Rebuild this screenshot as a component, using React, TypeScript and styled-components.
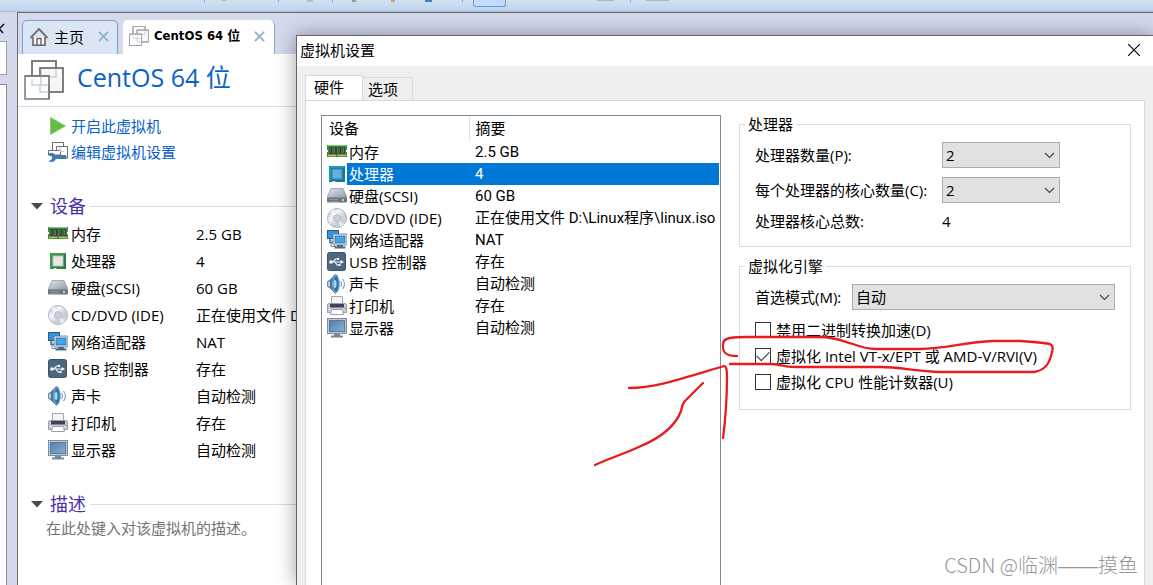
import React from "react";
import styled, { createGlobalStyle } from "styled-components";

const GlobalStyle = createGlobalStyle`
  * { box-sizing: border-box; }
  html, body, #root { height: 100%; }
  body {
    margin: 0;
    overflow: hidden;
    font-family: "Open Sans", "Noto Sans CJK SC", sans-serif;
    font-size: 15px;
    line-height: 20px;
    color: #000;
  }
  button, select, input { font: inherit; color: inherit; margin: 0; }
  button { padding: 0; border: 0; background: none; text-align: left; }
  h1, h2, p { margin: 0; font-weight: 400; }
  svg { display: block; flex: none; }
`;

/* ---------- Main window ---------- */

const Window = styled.div`
  position: relative;
  display: flex;
  flex-direction: column;
  height: 100vh;
  background: #d4d9ec;
  overflow: hidden;
`;

const Toolbar = styled.div`
  display: flex;
  flex: none;
  height: 12px;
  padding-left: 204px;
  background: linear-gradient(#d3e2f3, #bed3eb);
  border-bottom: 1px solid #a8bdd4;
`;

const ToolMark = styled.span<{ $gap: number; $w: number; $h: number; $color: string }>`
  flex: none;
  margin-left: ${(p) => p.$gap}px;
  width: ${(p) => p.$w}px;
  height: ${(p) => p.$h}px;
  background: ${(p) => p.$color};
`;

const PressedTool = styled.button`
  flex: none;
  width: 33px;
  height: 7px;
  margin-left: 10px;
  background: #c3dcfb;
  border: 1px solid #6b9bd0;
  border-top: 0;
  border-radius: 0 0 3px 3px;
`;

const Workspace = styled.div`
  display: flex;
  flex: 1;
  min-height: 0;
`;

const Library = styled.aside`
  display: flex;
  flex-direction: column;
  flex: none;
  width: 17px;
  padding-right: 10px;
`;

const LibraryClose = styled.button`
  height: 29px;
  padding-top: 2px;
  overflow: hidden;
`;

const SearchBox = styled.div`
  height: 34px;
  background: #fff;
  border: 1px solid #a0a0a0;
  border-left: 0;
`;

const LibraryTree = styled.div`
  flex: 1;
  margin-top: 9px;
  background: #fff;
  border: solid #828790;
  border-width: 1px 1px 0 0;
`;

const Document = styled.main`
  display: flex;
  flex-direction: column;
  flex: 1;
  min-width: 0;
  border: solid #6c6c6c;
  border-width: 1px 0 0 1px;
`;

const TabStrip = styled.div`
  display: flex;
  gap: 5px;
  height: 41px;
  padding: 7px 0 0 4px;
`;

const DocTab = styled.div<{ $active?: boolean }>`
  display: flex;
  align-items: center;
  gap: 6px;
  height: 34px;
  padding: 0 ${(p) => (p.$active ? 9 : 8)}px 2px 6px;
  background: ${(p) => (p.$active ? "#fff" : "#dbe6f5")};
  border: solid ${(p) => (p.$active ? "#8fa9c6" : "#7d9fc5")};
  border-width: ${(p) => (p.$active ? "0 1px 0 0" : "1px 1px 0 1px")};
  border-radius: 5px 5px 0 0;
`;

const TabName = styled.button<{ $bold?: boolean }>`
  display: flex;
  align-items: center;
  gap: 5px;
  font-family: ${(p) => (p.$bold ? '"DejaVu Sans Condensed", ' : "")}"Open Sans", "Noto Sans CJK SC", sans-serif;
  font-size: ${(p) => (p.$bold ? 13 : 15)}px;
  font-weight: ${(p) => (p.$bold ? 700 : 400)};
  white-space: nowrap;
`;

const TabClose = styled.button`
  margin-left: 8px;
`;

const Page = styled.div`
  flex: 1;
  min-height: 0;
  background: #fff;
`;

const PageHeader = styled.header`
  display: flex;
  align-items: flex-start;
  gap: 13px;
  height: 53px;
  padding: 6px 0 0 6px;
  border-bottom: 1px solid #cfe0f4;
`;

const PageTitle = styled.h1`
  font-size: 25px;
  line-height: 34px;
  color: #0a62c9;
`;

const Actions = styled.nav`
  display: flex;
  flex-direction: column;
  padding: 6px 0 0 30px;
`;

const ActionLink = styled.a`
  display: flex;
  align-items: center;
  gap: 3px;
  height: 26px;
  color: #0a62c9;
  text-decoration: none;
`;

const Section = styled.section`
  padding: 27px 0 0 13px;
`;

const SectionHead = styled.div`
  display: flex;
  align-items: center;
  gap: 7px;
  height: 28px;
  &::after { content: ""; flex: 1; height: 1px; background: #dcdcdc; margin-left: -3px; }
`;

const SectionTitle = styled.h2`
  font-size: 18px;
  line-height: 28px;
  color: #4a2fa5;
`;

const Summary = styled.table`
  margin-left: 17px;
  border-collapse: collapse;
  td { height: 27px; padding: 0; white-space: nowrap; }
  td:first-child { width: 148px; }
`;

const Placeholder = styled.p`
  padding-left: 15px;
  color: #747474;
`;

const IconLabel = styled.span`
  display: flex;
  align-items: center;
  gap: 3px;
`;

/* ---------- Settings dialog ---------- */

const Dialog = styled.section`
  position: absolute;
  top: 35px;
  right: 0;
  bottom: 0;
  left: 296px;
  display: flex;
  flex-direction: column;
  background: #efefef;
  border: solid #62646a;
  border-width: 1px 0 0 1px;
  box-shadow: 0 0 18px rgba(0, 0, 0, 0.38);
`;

const TitleBar = styled.header`
  display: flex;
  align-items: center;
  justify-content: space-between;
  height: 30px;
  padding: 0 12px 2px 3px;
  background: #fff;
`;

const DialogTabs = styled.div`
  display: flex;
  align-items: flex-end;
  height: 34px;
  padding-left: 8px;
`;

const DialogTab = styled.button<{ $active?: boolean }>`
  height: ${(p) => (p.$active ? 26 : 23)}px;
  width: ${(p) => (p.$active ? 58 : 50)}px;
  padding: 0 0 ${(p) => (p.$active ? 4 : 0)}px ${(p) => (p.$active ? 8 : 5)}px;
  margin-bottom: ${(p) => (p.$active ? -1 : 0)}px;
  background: ${(p) => (p.$active ? "#fff" : "#efefef")};
  border: 1px solid #d9d9d9;
  border-bottom: 0;
  border-left-width: ${(p) => (p.$active ? 1 : 0)}px;
`;

const DialogPanel = styled.div`
  display: grid;
  grid-template-columns: 400px 1fr;
  gap: 18px;
  flex: 1;
  margin: 0 8px 0 8px;
  padding: 14px 13px 0 15px;
  background: #fff;
  border: 1px solid #d9d9d9;
  border-bottom: 0;
`;

const DeviceList = styled.div`
  padding-right: 1px;
  border: 1px solid #828790;
  border-bottom: 0;
`;

const DeviceTable = styled.table`
  width: 100%;
  border-collapse: collapse;
  table-layout: fixed;
  th, td { padding: 0; text-align: left; font-weight: 400; white-space: nowrap; }
  th { height: 25px; padding: 0 0 1px 7px; }
  th:first-child { width: 147px; border-right: 1px solid #e2e2e2; }
  th + th { padding-left: 6px; }
  td { height: 22px; }
`;

const DeviceRow = styled.tr<{ $selected?: boolean }>`
  color: ${(p) => (p.$selected ? "#fff" : "#000")};
  td:first-child { padding-left: 5px; }
  td + td {
    padding-left: 6px;
    font-family: Roboto, "Noto Sans CJK SC", sans-serif;
    background: ${(p) => (p.$selected ? "#0078d7" : "transparent")};
  }
`;

const DeviceName = styled.span<{ $selected?: boolean }>`
  display: flex;
  align-items: center;
  height: 22px;
  & > span {
    flex: 1;
    padding-left: 2px;
    line-height: 22px;
    background: ${(p) => (p.$selected ? "#0078d7" : "transparent")};
  }
`;

const Settings = styled.form`
  display: flex;
  flex-direction: column;
  gap: 10px;
`;

const Group = styled.fieldset<{ $h: number }>`
  min-width: 0;
  min-height: ${(p) => p.$h}px;
  margin: 0;
  padding: 9px 15px 0 15px;
  border: 1px solid #dcdcdc;
  legend { padding: 0 3px; margin-left: -10px; line-height: 18px; }
`;

const Field = styled.div<{ $labelWidth: number; $wide?: boolean }>`
  display: grid;
  grid-template-columns: ${(p) => p.$labelWidth}px ${(p) => (p.$wide ? "1fr" : "118px")};
  align-items: center;
  margin-bottom: ${(p) => (p.$wide ? 7 : 9)}px;
  line-height: 18px;
  white-space: nowrap;
`;

const SelectBox = styled.span`
  position: relative;
  display: block;
  svg { position: absolute; right: 5px; top: 10px; pointer-events: none; }
`;

const Select = styled.select`
  display: block;
  width: 100%;
  height: 26px;
  padding: 0 20px 0 3px;
  appearance: none;
  background: #e1e1e1;
  border: 1px solid #adadad;
  border-radius: 0;
`;

const CheckRow = styled.label`
  display: flex;
  align-items: center;
  gap: 5px;
  height: 26px;
  white-space: nowrap;
`;

const Checkbox = styled.input`
  display: grid;
  place-items: center;
  width: 16px;
  height: 16px;
  appearance: none;
  background: #fff;
  border: 1px solid #333;
  &:checked::after {
    content: "";
    width: 11px;
    height: 6px;
    margin-bottom: 4px;
    border: solid #333;
    border-width: 0 0 1px 1px;
    transform: rotate(-45deg);
  }
`;

const Annotation = styled.svg`
  position: absolute;
  left: 590px;
  top: 330px;
  pointer-events: none;
`;

const Watermark = styled.span`
  position: absolute;
  right: 15px;
  bottom: 5px;
  font-family: "Noto Sans CJK SC", sans-serif;
  font-size: 20px;
  line-height: 28px;
  color: #979797;
  font-weight: 300;
`;

const Dashes = styled.span`
  font-family: "Liberation Sans", sans-serif;
`;

/* ---------- Icons ---------- */

const MemoryIcon = () => (
  <svg width="20" height="20" viewBox="0 0 20 20">
    <path d="M0 3h20v5h-1v2h1v5H0v-5h1V8H0z" fill="#37913b" />
    <path d="M1 3.500h18" stroke="#82c783" />
    <path d="M2 5h3.500v7H2zM6.500 5H10v7H6.500zM11 5h3.500v7H11zM15.500 5H18v7h-2.500z" fill="#38403a" />
    <path d="M3 6v5M7.500 6v5M12 6v5M16.500 6v5" stroke="#6a756b" />
    <path d="M1 13.500h8M11 13.500h8" stroke="#e0b052" strokeWidth="1.500" />
  </svg>
);

const CpuIcon = ({ selected }: { selected?: boolean }) => (
  <svg width="20" height="20" viewBox="0 0 20 20">
    <rect x="2" y="2" width="16" height="16" fill={selected ? "#117e93" : "#24833a"} />
    <path d="M3 17V3h14" fill="none" stroke={selected ? "#3eb0b8" : "#5bb565"} />
    <rect x="5" y="5" width="10" height="10" fill={selected ? "#6badde" : "#e6e8e6"} stroke={selected ? "#2a86bd" : "#b9c9b9"} />
    <path d="M5 18l1-1h2l1 1z" fill={selected ? "#bde8ef" : "#e9f5e9"} />
  </svg>
);

const DiskIcon = () => (
  <svg width="20" height="20" viewBox="0 0 20 20">
    <defs>
      <linearGradient id="disk" x2="1" y2="1">
        <stop stopColor="#dfe4ea" />
        <stop offset="1" stopColor="#9099a7" />
      </linearGradient>
    </defs>
    <path d="M4 2.500h12l4 9H0z" fill="url(#disk)" stroke="#8b93a0" strokeWidth=".7" />
    <rect y="11.500" width="20" height="5" rx="1" fill="#6a7583" />
    <path d="M2 13.500h9M2 15.500h9" stroke="#8b96a4" />
    <rect x="15" y="13" width="2" height="2" fill="#cfe66a" />
  </svg>
);

const DiscIcon = () => (
  <svg width="20" height="20" viewBox="0 0 20 20">
    <defs>
      <linearGradient id="disc" x2="1" y2="1">
        <stop stopColor="#b1b9c3" />
        <stop offset=".35" stopColor="#f3f6f9" />
        <stop offset=".65" stopColor="#c4cdd8" />
        <stop offset="1" stopColor="#dfe4ea" />
      </linearGradient>
    </defs>
    <circle cx="10" cy="10" r="9.500" fill="url(#disc)" stroke="#9ba7b4" strokeWidth=".8" />
    <path d="M10 10L3 3.500 6.500 1.500zM10 10l7 6.500-3.500 2z" fill="#fff" opacity=".6" />
    <circle cx="10" cy="10" r="3.300" fill="#dbe2e9" stroke="#a6b1bd" />
    <circle cx="10" cy="10" r="1.300" fill="#fff" stroke="#8996a5" strokeWidth=".6" />
  </svg>
);

const NetworkIcon = () => (
  <svg width="20" height="20" viewBox="0 0 20 20">
    <rect x=".5" y=".5" width="11" height="8" fill="#3595da" stroke="#315878" />
    <path d="M3 9v3.500h4" fill="none" stroke="#45637c" strokeWidth="1.500" />
    <path d="M4 10v6.500h5" fill="none" stroke="#73899c" />
    <rect x="6" y="4" width="14" height="11" rx="1" fill="#e4ecf4" stroke="#506a80" strokeWidth=".8" />
    <rect x="8" y="6" width="10" height="7" fill="#44a4e7" stroke="#245f93" strokeWidth=".7" />
    <path d="M10 15h6v1.500h2.500v2H7.500v-2H10z" fill="#526a7e" />
  </svg>
);

const UsbIcon = () => (
  <svg width="20" height="20" viewBox="0 0 20 20">
    <rect x=".5" y=".5" width="18" height="18" rx="2" fill="#4e6780" stroke="#3d5369" />
    <path d="M3 10h11M6 10l2.500-3H11M8 10l2 3h2" fill="none" stroke="#eef2f6" strokeWidth="1.200" />
    <circle cx="4" cy="10" r="1.800" fill="#fff" />
    <path d="M13.500 8l3.500 2-3.500 2z" fill="#fff" />
    <circle cx="11" cy="6.900" r="1.200" fill="#fff" />
    <path d="M11.500 12h2v2h-2z" fill="#fff" />
  </svg>
);

const SoundIcon = () => (
  <svg width="20" height="20" viewBox="0 0 20 20">
    <path d="M.5 7.500L3 6l5-5.500 2.500 1v16l-2 2L3 14l-2.500-1.500z" fill="#47759b" stroke="#4f6980" strokeWidth=".6" />
    <path d="M1 8l2-1v6l-2-1z" fill="#acd5f0" />
    <ellipse cx="9" cy="10" rx="3.300" ry="8.500" fill="#2378b8" stroke="#9fb2c2" />
    <ellipse cx="8" cy="10" rx="1.500" ry="4" fill="#a7d7f3" />
    <path d="M13.500 7q2 3 0 6M15.500 5q4 5 0 10" fill="none" stroke="#83a4c0" strokeWidth="1.200" />
  </svg>
);

const PrinterIcon = () => (
  <svg width="20" height="20" viewBox="0 0 20 20">
    <path d="M4.500.5h11V9h-11z" fill="#f4f5f8" stroke="#a3a6b5" />
    <path d="M.5 9Q.5 7.500 2 7.500h16q1.500 0 1.500 1.500v7.500H.5z" fill="#c7cad7" stroke="#9a9eae" />
    <rect x="3" y="8" width="14" height="3.500" fill="#3d4450" />
    <path d="M2 13.500h16" stroke="#eceef5" />
    <path d="M4.500 13.500h11l1 5h-13z" fill="#fff" stroke="#9a9db2" />
    <path d="M17 12.500h2" stroke="#63b54c" />
  </svg>
);

const DisplayIcon = () => (
  <svg width="20" height="20" viewBox="0 0 20 20">
    <defs>
      <linearGradient id="screen" x2="1" y2="1">
        <stop stopColor="#4d7dad" />
        <stop offset="1" stopColor="#8db2d2" />
      </linearGradient>
    </defs>
    <rect x=".5" y=".5" width="19" height="15" fill="#c0cad4" stroke="#7d8d9d" />
    <rect x="2.500" y="2.500" width="15" height="11" fill="url(#screen)" stroke="#5c7b99" />
    <path d="M7 16h6v1.500h3V19.500H4v-2h3z" fill="#758798" />
  </svg>
);

const HomeIcon = () => (
  <svg width="20" height="20" viewBox="0 0 20 20" fill="none" stroke="#666" strokeWidth="1.600">
    <path d="M4 10v8.200h12V10" fill="#f5f5f5" />
    <path d="M1.500 11L10 2l8.500 9" stroke="#777" strokeWidth="2" />
    <path d="M8 18v-6.500h4V18" strokeWidth="1.400" />
  </svg>
);

const StackIcon = ({ size, light }: { size: number; light?: boolean }) => (
  <svg width={size} height={size} viewBox="0 0 40 40" fill="none" stroke={light ? "#a3a3a3" : "#777"} strokeWidth={light ? 2 : 1.500}>
    <rect x="8" y="1" width="24" height="24" fill="#fff" />
    <rect x="16" y="8" width="23" height="24" fill="#f7f7f7" />
    <rect x="1" y="16" width="24" height="23" fill="#fff" />
    <path d="M8 19v6h9V9M16 25v7h9M25 17h7v-8M17 16v9h8v-9" stroke="#c5d3e8" />
    <path d="M1 16h24v23M8 16V1h24v7M16 16V8h23v24H25" />
  </svg>
);

const PlayIcon = () => (
  <svg width="20" height="20" viewBox="0 0 20 20">
    <path d="M2.500 1.500L17.500 10l-15 8.500z" fill="#62bd45" stroke="#7acb60" strokeWidth=".8" />
  </svg>
);

const EditIcon = () => (
  <svg width="20" height="20" viewBox="0 0 20 20">
    <g fill="#fff" stroke="#6d6d6d">
      <path d="M4.500.5h11v9h-11z" />
      <path d="M8.500 4.500h11V16h-11z" />
      <path d="M.5 8.500h12V13H.5z" />
      <path d="M12 5v4.500h4" stroke="#bccbe0" fill="none" />
    </g>
    <path d="M1 11.500q4-2 6 1.500h10.500q2 2 0 4H8q-2 4-7.500 2.500l3.500-2.500v-2.500L0 13z" fill="#4279b3" />
  </svg>
);

const Cross = ({ size, color, weight = 1 }: { size: number; color: string; weight?: number }) => (
  <svg width={size} height={size} viewBox="0 0 12 12" fill="none" stroke={color} strokeWidth={weight}>
    <path d="M1 1l10 10M11 1L1 11" />
  </svg>
);

const Chevron = () => (
  <svg width="11" height="7" viewBox="0 0 11 7" fill="none" stroke="#444" strokeWidth="1.100">
    <path d="M1 1l4.500 4.500L10 1" />
  </svg>
);

const Arrow = () => (
  <svg width="12" height="7" viewBox="0 0 12 7">
    <path d="M0 0h12L6 6.500z" fill="#4a4a4a" />
  </svg>
);

/* ---------- Data ---------- */

type Device = { name: string; value: string; icon: (p: { selected?: boolean }) => React.ReactElement };

const devices: Device[] = [
  { name: "内存", value: "2.5 GB", icon: MemoryIcon },
  { name: "处理器", value: "4", icon: CpuIcon },
  { name: "硬盘(SCSI)", value: "60 GB", icon: DiskIcon },
  { name: "CD/DVD (IDE)", value: "正在使用文件 D:\\Linux程序\\linux.iso", icon: DiscIcon },
  { name: "网络适配器", value: "NAT", icon: NetworkIcon },
  { name: "USB 控制器", value: "存在", icon: UsbIcon },
  { name: "声卡", value: "自动检测", icon: SoundIcon },
  { name: "打印机", value: "存在", icon: PrinterIcon },
  { name: "显示器", value: "自动检测", icon: DisplayIcon },
];

const Dropdown = ({ id, options }: { id: string; options: string[] }) => (
  <SelectBox>
    <Select id={id} defaultValue={options[0]}>
      {options.map((o) => (
        <option key={o}>{o}</option>
      ))}
    </Select>
    <Chevron />
  </SelectBox>
);

export default function App() {
  return (
    <>
      <GlobalStyle />
      <Window>
        <Toolbar>
          <ToolMark $gap={0} $w={1} $h={2} $color="#7fa6d0" />
          <ToolMark $gap={17} $w={4} $h={1} $color="#92cf9b" />
          <ToolMark $gap={52} $w={1} $h={2} $color="#7fa6d0" />
          <ToolMark $gap={28} $w={6} $h={2} $color="#b3bfd0" />
          <ToolMark $gap={19} $w={1} $h={2} $color="#7fa6d0" />
          <ToolMark $gap={19} $w={4} $h={2} $color="#87a493" />
          <ToolMark $gap={35} $w={4} $h={2} $color="#d8a069" />
          <ToolMark $gap={30} $w={7} $h={2} $color="#4a80b8" />
          <ToolMark $gap={30} $w={1} $h={2} $color="#7fa6d0" />
          <PressedTool aria-label="单一窗口" />
          <ToolMark $gap={91} $w={17} $h={1} $color="#a9b6c8" />
          <ToolMark $gap={16} $w={1} $h={2} $color="#7fa6d0" />
          <ToolMark $gap={15} $w={23} $h={1} $color="#a9b6c8" />
        </Toolbar>
        <Workspace>
          <Library>
            <LibraryClose aria-label="关闭">
              <svg width="7" height="14" viewBox="0 0 7 14" fill="none" stroke="#111" strokeWidth="1.500">
                <path d="M-5 3l8 9M4 3l-9 9" />
              </svg>
            </LibraryClose>
            <SearchBox />
            <LibraryTree />
          </Library>
          <Document>
            <TabStrip>
              <DocTab>
                <TabName>
                  <HomeIcon />
                  主页
                </TabName>
                <TabClose aria-label="关闭主页">
                  <Cross size={11} color="#8fb2d0" weight={2} />
                </TabClose>
              </DocTab>
              <DocTab $active>
                <TabName $bold>
                  <StackIcon size={20} light />
                  CentOS 64 位
                </TabName>
                <TabClose aria-label="关闭 CentOS 64 位">
                  <Cross size={11} color="#8fb2d0" weight={2} />
                </TabClose>
              </DocTab>
            </TabStrip>
            <Page>
              <PageHeader>
                <StackIcon size={40} />
                <PageTitle>CentOS 64 位</PageTitle>
              </PageHeader>
              <Actions>
                <ActionLink href="#power">
                  <PlayIcon />
                  开启此虚拟机
                </ActionLink>
                <ActionLink href="#edit">
                  <EditIcon />
                  编辑虚拟机设置
                </ActionLink>
              </Actions>
              <Section>
                <SectionHead>
                  <Arrow />
                  <SectionTitle>设备</SectionTitle>
                </SectionHead>
                <Summary>
                  <tbody>
                    {devices.map(({ name, value, icon: Icon }) => (
                      <tr key={name}>
                        <td>
                          <IconLabel>
                            <Icon />
                            {name}
                          </IconLabel>
                        </td>
                        <td>{value}</td>
                      </tr>
                    ))}
                  </tbody>
                </Summary>
              </Section>
              <Section>
                <SectionHead>
                  <Arrow />
                  <SectionTitle>描述</SectionTitle>
                </SectionHead>
                <Placeholder>在此处键入对该虚拟机的描述。</Placeholder>
              </Section>
            </Page>
          </Document>
        </Workspace>

        <Dialog role="dialog" aria-labelledby="settings-title">
          <TitleBar>
            <span id="settings-title">虚拟机设置</span>
            <button aria-label="关闭">
              <Cross size={14} color="#000" />
            </button>
          </TitleBar>
          <DialogTabs role="tablist">
            <DialogTab role="tab" aria-selected $active>
              硬件
            </DialogTab>
            <DialogTab role="tab">选项</DialogTab>
          </DialogTabs>
          <DialogPanel>
            <DeviceList>
              <DeviceTable>
                <thead>
                  <tr>
                    <th>设备</th>
                    <th>摘要</th>
                  </tr>
                </thead>
                <tbody>
                  {devices.map(({ name, value, icon: Icon }) => {
                    const selected = name === "处理器";
                    return (
                      <DeviceRow key={name} $selected={selected}>
                        <td>
                          <DeviceName $selected={selected}>
                            <Icon selected={selected} />
                            <span>{name}</span>
                          </DeviceName>
                        </td>
                        <td>{value}</td>
                      </DeviceRow>
                    );
                  })}
                </tbody>
              </DeviceTable>
            </DeviceList>
            <Settings>
              <Group $h={132}>
                <legend>处理器</legend>
                <Field $labelWidth={187}>
                  <label htmlFor="cpus">处理器数量(P):</label>
                  <Dropdown id="cpus" options={["2", "1", "4"]} />
                </Field>
                <Field $labelWidth={187}>
                  <label htmlFor="cores">每个处理器的核心数量(C):</label>
                  <Dropdown id="cores" options={["2", "1", "4"]} />
                </Field>
                <Field $labelWidth={187}>
                  <span>处理器核心总数:</span>
                  <span>4</span>
                </Field>
              </Group>
              <Group $h={153}>
                <legend>虚拟化引擎</legend>
                <Field $labelWidth={97} $wide>
                  <label htmlFor="mode">首选模式(M):</label>
                  <Dropdown id="mode" options={["自动"]} />
                </Field>
                <CheckRow>
                  <Checkbox type="checkbox" />
                  禁用二进制转换加速(D)
                </CheckRow>
                <CheckRow>
                  <Checkbox type="checkbox" defaultChecked />
                  虚拟化 Intel VT-x/EPT 或 AMD-V/RVI(V)
                </CheckRow>
                <CheckRow>
                  <Checkbox type="checkbox" />
                  虚拟化 CPU 性能计数器(U)
                </CheckRow>
              </Group>
            </Settings>
          </DialogPanel>
        </Dialog>

        <Annotation width="470" height="145" viewBox="590 330 470 145" fill="none" stroke="#e81c1e" strokeWidth="2.300" strokeLinecap="round" strokeLinejoin="round">
          <path d="M737 356C728 356 723 354 723 347Q722 339 730 338Q736 337 747 337H820C835 337 842 341 853 344Q866 349 876 349H920C945 349 965 342 993 341H1020C1035 342 1045 343 1050 344Q1054 346 1052 352C1050 361 1047 370 1034 372H940C915 371 900 367 880 367H795C783 367 780 364 770 364H730" />
          <path d="M629 388C655 388 680 379 724 366Q727 366 727 376C727 395 726 415 723 438" />
          <path d="M703 383L695 391L684 402Q682 405 681 411C674 430 655 440 641 446C624 454 610 458 595 465" />
        </Annotation>
        <Watermark>
          CSDN @临渊<Dashes>——</Dashes>摸鱼
        </Watermark>
      </Window>
    </>
  );
}
